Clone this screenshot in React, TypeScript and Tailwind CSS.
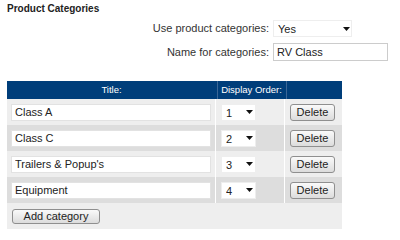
import { useState } from "react";

const Arrow = () => (
  <svg
    className="pointer-events-none absolute top-1/2 -translate-y-1/2"
    width="7"
    height="4"
    viewBox="0 0 7 4"
  >
    <path d="M0 0h7L3.5 4z" fill="#111" />
  </svg>
);

const rows = ["Class A", "Class C", "Trailers & Popup's", "Equipment"];

export default function App() {
  const [items, setItems] = useState(rows);

  return (
    <div
      className="w-[400px] h-[233px] bg-white text-[11px] text-[#333] pl-[7px] pt-[1px]"
      style={{ fontFamily: '"Liberation Sans", Arial, sans-serif' }}
    >
      <div className="font-bold text-[10px] text-[#222] h-[16px] leading-[16px]">
        Product Categories
      </div>

      <div className="flex flex-col gap-[6px] mt-[3px]">
        <div className="flex items-center h-[17px]">
          <span className="w-[266px] text-right pr-[4px]">Use product categories:</span>
          <div className="relative w-[79px] h-[17px]">
            <select className="appearance-none w-full h-full bg-white border border-[#eee] pl-[4px] text-[11px] text-[#222] outline-none">
              <option>Yes</option>
              <option>No</option>
            </select>
            <span className="absolute right-[9px] top-0 h-full">
              <Arrow />
            </span>
          </div>
        </div>
        <div className="flex items-center h-[18px]">
          <span className="w-[266px] text-right pr-[4px]">Name for categories:</span>
          <input
            defaultValue="RV Class"
            className="w-[115px] h-[18px] border border-[#ccc] px-[3px] text-[11px] text-[#222] outline-none"
          />
        </div>
      </div>

      <div className="mt-[20px] w-[335px]">
        <div className="flex h-[18px] bg-[#003e7a] text-white text-[9.5px] leading-[18px] gap-px">
          <div className="w-[209px] text-center">Title:</div>
          <div className="w-[68px] text-center border-l border-[#3b6797]">Display Order:</div>
          <div className="flex-1 border-l border-[#3b6797]" />
        </div>

        {items.map((name, i) => (
          <div
            key={i}
            className={`flex h-[26px] gap-px ${i % 2 === 0 ? "bg-[#eeeeee]" : "bg-[#dddddd]"}`}
          >
            <div className="w-[209px] flex items-center pl-[4px] border-r border-white">
              <input
                defaultValue={name}
                className="w-[200px] h-[17px] bg-white border border-[#e2e2e2] px-[3px] text-[11px] text-[#222] outline-none"
              />
            </div>
            <div className="w-[68px] flex items-center pl-[4px] border-r border-white">
              <div className="relative w-[35px] h-[17px]">
                <select
                  defaultValue={String(i + 1)}
                  className="appearance-none w-full h-full bg-white border border-[#eee] pl-[4px] text-[11px] text-[#222] outline-none"
                >
                  {[1, 2, 3, 4].map((n) => (
                    <option key={n}>{n}</option>
                  ))}
                </select>
                <span className="absolute right-[10px] top-0 h-full">
                  <Arrow />
                </span>
              </div>
            </div>
            <div className="flex-1 flex items-center pl-[4px]">
              <button
                onClick={() => setItems(items.filter((_, j) => j !== i))}
                className="w-[45px] h-[17px] rounded-[3px] border border-[#8f8f8f] bg-gradient-to-b from-[#fafafa] to-[#dcdcdc] text-[11px] text-[#222] leading-[15px]"
              >
                Delete
              </button>
            </div>
          </div>
        ))}

        <div className="h-[26px] bg-[#eeeeee] flex items-center pl-[5px]">
          <button
            onClick={() => setItems([...items, ""])}
            className="w-[88px] h-[15px] rounded-[3px] border border-[#8f8f8f] bg-gradient-to-b from-[#fafafa] to-[#dcdcdc] text-[11px] text-[#222] leading-[13px]"
          >
            Add category
          </button>
        </div>
      </div>
    </div>
  );
}
